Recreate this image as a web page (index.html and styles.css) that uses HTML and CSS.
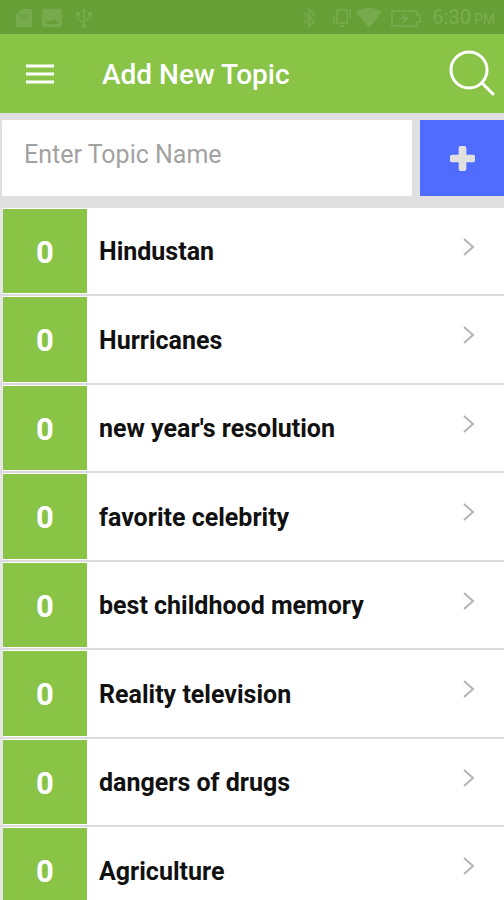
FILE: index.html
```html
<!DOCTYPE html>
<html lang="en">
<head>
<meta charset="utf-8">
<meta name="viewport" content="width=device-width, initial-scale=1">
<title>Add New Topic</title>
<link rel="stylesheet" href="styles.css">
</head>
<body>
<div class="status">
  <svg class="status-icon" viewBox="0 0 20 20" aria-hidden="true"><path d="M8 1h10v18H2V7z"/><path class="slot" d="M7 6v5M10 6v5M13 6v5"/></svg>
  <svg class="status-icon" viewBox="0 0 20 20" aria-hidden="true"><path fill-rule="evenodd" d="M2 1h16l2 2v14l-2 2H2l-2-2V3zM3 16h14l-5-5-4 3-2-2z"/></svg>
  <svg class="status-icon usb" viewBox="0 0 20 20" aria-hidden="true"><path class="line" d="M10 3v15M4 7v4l6 4M16 6v4l-6 3"/><path d="M10 0l3 4H7zM14 4h4v4h-4z"/><circle cx="4" cy="6" r="2"/><circle cx="10" cy="18" r="2"/></svg>
  <span class="spacer"></span>
  <svg class="status-icon" viewBox="0 0 20 20" aria-hidden="true"><path class="line" d="M5 5l10 9-5 5V1l5 5L5 15M2 10h1M17 10h1"/></svg>
  <svg class="status-icon vibrate" viewBox="0 0 20 20" aria-hidden="true"><path class="line" d="M6 2h10v13H6zM3 8v8M19 1v9M8 18h5"/></svg>
  <svg class="status-icon wifi" viewBox="0 0 26 20" aria-hidden="true"><path d="M0 4Q13-4 26 4L13 20z"/></svg>
  <svg class="status-icon battery" viewBox="0 0 32 20" aria-hidden="true"><path class="line" d="M2 3h25v4h3v7h-3v4H2z"/><path d="M17 4l-7 7h4l-2 5 8-7h-5z"/></svg>
  <span class="clock">6:30<small>PM</small></span>
</div>
<header class="bar">
  <button class="menu" type="button" aria-label="Menu"><svg viewBox="0 0 28 20"><path d="M0 2h28M0 10h28M0 18h28"/></svg></button>
  <h1>Add New Topic</h1>
  <button class="search" type="button" aria-label="Search"><svg viewBox="0 0 48 48"><circle cx="21" cy="20" r="18"/><path d="M34 33l11 11"/></svg></button>
</header>
<main>
  <form class="add">
    <input type="text" aria-label="Topic name" placeholder="Enter Topic Name">
    <button type="button" aria-label="Add topic"><svg viewBox="0 0 26 26"><path d="M11 0h4q2 0 2 2v7h7q2 0 2 2v4q0 2-2 2h-7v7q0 2-2 2h-4q-2 0-2-2v-7H2q-2 0-2-2v-4q0-2 2-2h7V2q0-2 2-2z"/></svg></button>
  </form>
  <ul class="topics">
    <li><a href="#"><span class="count">0</span><span class="name">Hindustan</span><svg class="chevron" viewBox="0 0 12 20"><path d="M1 2l9 8-9 8"/></svg></a></li>
    <li><a href="#"><span class="count">0</span><span class="name">Hurricanes</span><svg class="chevron" viewBox="0 0 12 20"><path d="M1 2l9 8-9 8"/></svg></a></li>
    <li><a href="#"><span class="count">0</span><span class="name">new year's resolution</span><svg class="chevron" viewBox="0 0 12 20"><path d="M1 2l9 8-9 8"/></svg></a></li>
    <li><a href="#"><span class="count">0</span><span class="name">favorite celebrity</span><svg class="chevron" viewBox="0 0 12 20"><path d="M1 2l9 8-9 8"/></svg></a></li>
    <li><a href="#"><span class="count">0</span><span class="name">best childhood memory</span><svg class="chevron" viewBox="0 0 12 20"><path d="M1 2l9 8-9 8"/></svg></a></li>
    <li><a href="#"><span class="count">0</span><span class="name">Reality television</span><svg class="chevron" viewBox="0 0 12 20"><path d="M1 2l9 8-9 8"/></svg></a></li>
    <li><a href="#"><span class="count">0</span><span class="name">dangers of drugs</span><svg class="chevron" viewBox="0 0 12 20"><path d="M1 2l9 8-9 8"/></svg></a></li>
    <li><a href="#"><span class="count">0</span><span class="name">Agriculture</span><svg class="chevron" viewBox="0 0 12 20"><path d="M1 2l9 8-9 8"/></svg></a></li>
  </ul>
</main>
</body>
</html>
```
FILE: styles.css
```css
* { box-sizing: border-box; }

html { height: 100%; }

body {
  height: 100%;
  margin: 0;
  display: flex;
  flex-direction: column;
  overflow: hidden;
  background: #e0e0e0;
  font-family: Roboto, "Liberation Sans", sans-serif;
}

button { border: 0; padding: 0; background: none; }

svg { display: block; flex: none; }

.status {
  display: flex;
  flex: none;
  align-items: center;
  gap: 8px;
  height: 34px;
  padding: 2px 9px 0 14px;
  background: #679f37;
  color: #7bad50;
}

.status-icon { width: 20px; height: 20px; fill: #77aa4c; }
.status-icon .line { fill: none; stroke: #74a848; stroke-width: 2; }
.status-icon .slot { stroke: #689f38; stroke-width: 1; }
.usb { margin-left: 4px; }
.vibrate { margin-left: 4px; }
.wifi { width: 26px; margin-left: -3px; }
.battery { width: 32px; }
.spacer { flex: 1; }
.clock { margin-left: 2px; font-size: 20px; line-height: 24px; }
.clock small { margin-left: 3px; font-size: 14px; }

.bar {
  display: flex;
  flex: none;
  align-items: center;
  height: 79px;
  padding: 0 8px 0 26px;
  background: #89c447;
  color: #fff;
}

.bar svg { fill: none; stroke: #fff; }
.menu svg { width: 28px; height: 20px; stroke-width: 3; }

.bar h1 {
  flex: 1;
  margin: 0 0 0 48px;
  padding-top: 2px;
  font-size: 28px;
  font-weight: 500;
  line-height: 32px;
}

.search svg { width: 48px; height: 48px; stroke-width: 3; stroke-linecap: round; }

main { flex: 1; min-height: 0; overflow: hidden; }

.add { display: flex; gap: 8px; padding: 7px 0 12px 2px; }

.add input {
  flex: 1;
  min-width: 0;
  height: 76px;
  padding: 0 22px 8px;
  border: 0;
  border-radius: 2px;
  background: #fff;
  font-family: inherit;
  font-size: 25px;
}

.add input::placeholder { color: #a2a2a2; opacity: 1; }

.add button {
  display: grid;
  place-items: center;
  width: 84px;
  height: 76px;
  background: #506cff;
}

.add svg { width: 25px; height: 25px; fill: #e0e0e0; }

.topics { margin: 0; padding: 0; list-style: none; }
.topics li { height: 88px; border-bottom: 2px solid #dcdcdc; background: #fff; }
.topics li:nth-child(even) { height: 89px; }

.topics a {
  display: flex;
  align-items: center;
  height: 100%;
  padding: 1px 29px 1px 0;
  border-left: 3px solid #e6e6e6;
  color: #111;
  text-decoration: none;
}

.count {
  display: grid;
  place-items: center;
  align-self: stretch;
  width: 84px;
  padding-top: 2px;
  margin-right: 12px;
  background: #89c447;
  color: #fff;
  font-size: 31px;
  font-weight: 700;
}

.name { flex: 1; padding-top: 2px; font-size: 25px; font-weight: 700; line-height: 32px; }

.chevron {
  width: 12px;
  height: 20px;
  margin-bottom: 9px;
  fill: none;
  stroke: #b4b4b4;
  stroke-width: 2;
}
```
